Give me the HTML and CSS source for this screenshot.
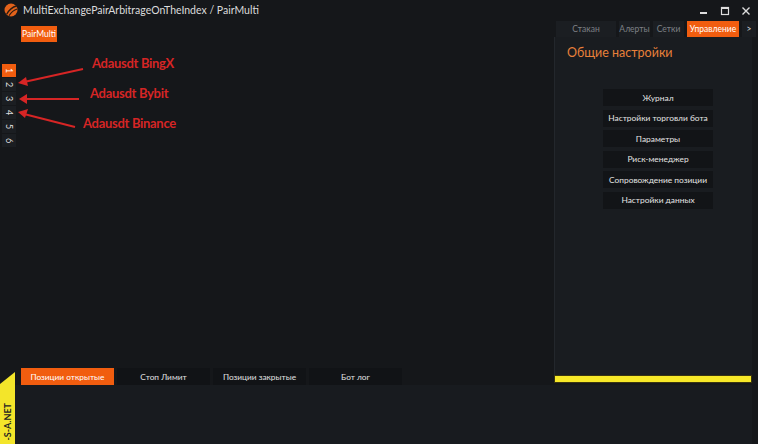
FILE: index.html
```html
<!DOCTYPE html>
<html>
<head>
  <title>PairMulti</title>
  <link rel="stylesheet" href="styles.css">
</head>
<body>
  <div class="window">
    <div class="titlebar">
      <svg class="logo" width="14" height="14" viewBox="0 0 14 14">
        <circle cx="7" cy="7" r="6.5" fill="#e2621b"/>
        <path d="M2.5 11.5 C5 7 8 4 12.5 3" stroke="#2a1a10" stroke-width="1.3" fill="none"/>
        <path d="M5 12.8 C7 9.5 9.5 7 13.2 6" stroke="#2a1a10" stroke-width="1.1" fill="none"/>
      </svg>
      <span class="title">MultiExchangePairArbitrageOnTheIndex / PairMulti</span>
      <div class="controls">
        <svg width="10" height="10" viewBox="0 0 10 10"><rect x="1" y="6" width="7" height="2" fill="#ddd"/></svg>
        <svg width="10" height="10" viewBox="0 0 10 10"><rect x="1.5" y="1.5" width="7" height="7" fill="none" stroke="#ddd" stroke-width="1.2"/><rect x="1.5" y="1.5" width="7" height="1.5" fill="#ddd"/></svg>
        <svg width="10" height="10" viewBox="0 0 10 10"><path d="M1.5 1.5 L8.5 8.5 M8.5 1.5 L1.5 8.5" stroke="#ddd" stroke-width="1.4"/></svg>
      </div>
    </div>

    <div class="main">
      <div class="left">
        <div class="toolbar">
          <button class="btn-orange">PairMulti</button>
        </div>
        <div class="workspace">
          <div class="vtabs">
            <div class="vtab active">1</div>
            <div class="vtab">2</div>
            <div class="vtab">3</div>
            <div class="vtab">4</div>
            <div class="vtab">5</div>
            <div class="vtab">6</div>
          </div>
          <svg class="arrows" width="120" height="90" viewBox="0 0 120 90">
            <line x1="83" y1="13" x2="24" y2="26" stroke="#d62525" stroke-width="2"/>
            <path d="M26 21 L18 27 L28 30 Z" fill="#d62525"/>
            <line x1="79" y1="43" x2="25" y2="43" stroke="#d62525" stroke-width="2"/>
            <path d="M27 38 L19 43 L27 48 Z" fill="#d62525"/>
            <line x1="75" y1="71" x2="24" y2="58" stroke="#d62525" stroke-width="2"/>
            <path d="M28 53 L18 56 L25 62 Z" fill="#d62525"/>
          </svg>
          <span class="note note-1">Adausdt BingX</span>
          <span class="note note-2">Adausdt Bybit</span>
          <span class="note note-3">Adausdt Binance</span>
        </div>
        <div class="bottom-tabs">
          <div class="btab active">Позиции открытые</div>
          <div class="btab">Стоп Лимит</div>
          <div class="btab">Позиции закрытые</div>
          <div class="btab">Бот лог</div>
        </div>
      </div>

      <div class="right">
        <div class="rtabs">
          <div class="rtab stakan">Стакан</div>
          <div class="rtab">Алерты</div>
          <div class="rtab">Сетки</div>
          <div class="rtab active">Управление</div>
          <div class="rtab more">&gt;</div>
        </div>
        <div class="panel">
          <h2 class="panel-title">Общие настройки</h2>
          <div class="menu">
            <div class="menu-item">Журнал</div>
            <div class="menu-item">Настройки торговли бота</div>
            <div class="menu-item">Параметры</div>
            <div class="menu-item">Риск-менеджер</div>
            <div class="menu-item">Сопровождение позиции</div>
            <div class="menu-item">Настройки данных</div>
          </div>
        </div>
        <div class="yellow-bar"></div>
      </div>
    </div>

    <div class="bottom">
      <div class="brand"><span>-S-A.NET</span></div>
      <div class="log"></div>
    </div>
  </div>
</body>
</html>
```

FILE: styles.css
```css
html, body {
  margin: 0;
  padding: 0;
}

body {
  width: 758px;
  height: 444px;
  overflow: hidden;
  background: #15171a;
  font-family: Lato, "Open Sans", sans-serif;
  color: #e6e6e6;
}

.window {
  display: grid;
  grid-template-rows: 20px 365px 59px;
  height: 444px;
}

/* title bar */
.titlebar {
  display: flex;
  align-items: center;
  padding-left: 4px;
}

.logo {
  margin-right: 5px;
}

.title {
  font-size: 10.5px;
  color: #dcdcdc;
}

.controls {
  margin-left: auto;
  display: flex;
  gap: 11px;
  padding-right: 7px;
  padding-top: 2px;
}

/* main */
.main {
  display: grid;
  grid-template-columns: 554px 204px;
}

.left {
  display: flex;
  flex-direction: column;
}

.toolbar {
  height: 22px;
  padding-left: 21px;
  padding-top: 1px;
}

.btn-orange {
  background: #f15d0f;
  color: #fff;
  border: none;
  font-family: inherit;
  font-size: 8.5px;
  width: 36px;
  height: 16px;
  padding: 0;
}

.workspace {
  position: relative;
  flex: 1;
}

.vtabs {
  display: flex;
  flex-direction: column;
  gap: 1px;
  padding-top: 21px;
  padding-left: 2px;
}

.vtab {
  width: 14px;
  height: 13px;
  background: #1b1e22;
  writing-mode: vertical-rl;
  font-size: 9px;
  display: flex;
  align-items: center;
  justify-content: center;
  color: #ddd;
}

.vtab.active {
  background: #f15d0f;
  color: #fff;
}

.arrows {
  position: absolute;
  left: 0;
  top: 13px;
}

.note {
  position: absolute;
  color: #d62525;
  font-weight: bold;
  font-size: 13px;
  letter-spacing: -0.3px;
  white-space: nowrap;
}

.note-1 { left: 92px; top: 12px; }
.note-2 { left: 90px; top: 42px; }
.note-3 { left: 83px; top: 72px; }

.bottom-tabs {
  display: flex;
  gap: 3px;
  padding-left: 21px;
  height: 17px;
}

.btab {
  width: 93px;
  background: #111316;
  font-size: 8.3px;
  display: flex;
  align-items: center;
  justify-content: center;
  color: #e0e0e0;
}

.btab.active {
  background: #f15d0f;
  color: #fff;
}

/* right panel */
.right {
  display: flex;
  flex-direction: column;
}

.rtabs {
  display: flex;
  gap: 3px;
  padding-top: 1px;
  padding-left: 2px;
  height: 16px;
}

.rtab {
  width: 31px;
  background: #1b1e22;
  color: #7d8085;
  font-size: 8.5px;
  display: flex;
  align-items: center;
  justify-content: center;
}

.rtab.stakan {
  width: 60px;
}

.rtab.active {
  width: 52px;
  background: #f15d0f;
  color: #fff;
}

.rtab.more {
  width: 14px;
  color: #ddd;
}

.panel {
  flex: 1;
  margin-right: 6px;
  background: #191c20;
  border-left: 1px solid #23272c;
  padding-top: 8px;
}

.panel-title {
  margin: 0 0 0 12px;
  font-weight: normal;
  font-size: 12.5px;
  color: #e8803a;
}

.menu {
  display: flex;
  flex-direction: column;
  gap: 3.5px;
  margin: 29px 0 0 48px;
  width: 110px;
}

.menu-item {
  height: 17px;
  background: #121417;
  font-size: 8.4px;
  display: flex;
  align-items: center;
  justify-content: center;
  color: #e4e4e4;
}

.yellow-bar {
  height: 6px;
  margin-right: 6px;
  background: #f7e828;
  border: 1px solid #3a3510;
  margin-bottom: 2px;
}

/* bottom */
.bottom {
  display: flex;
}

.brand {
  width: 15px;
  background: #f3e52a;
  clip-path: polygon(0 12px, 100% 0, 100% 100%, 0 100%);
  margin-top: -13px;
  display: flex;
  align-items: flex-end;
  justify-content: center;
}

.brand span {
  writing-mode: vertical-rl;
  transform: rotate(180deg);
  font-size: 9px;
  font-weight: bold;
  color: #222;
  padding-top: 3px;
}

.log {
  width: 737px;
  background: #181b1f;
}
```
